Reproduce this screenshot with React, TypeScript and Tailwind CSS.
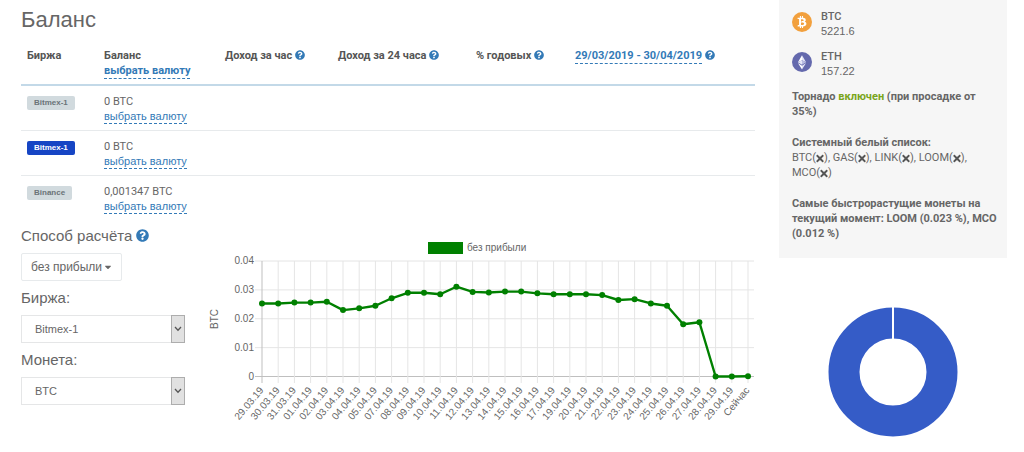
import React, { useState } from 'react';
import { FaBtc, FaCaretDown, FaQuestionCircle, FaTimes } from 'react-icons/fa';
import clsx from 'clsx';

const balances = [
    { name: 'Bitmex-1', amount: '0 BTC', active: false },
    { name: 'Bitmex-1', amount: '0 BTC', active: true },
    { name: 'Binance', amount: '0,001347 BTC', active: false },
];

const history: [string, number][] = [
    ['29.03.19', 0.0253], ['30.03.19', 0.0253], ['31.03.19', 0.0256], ['01.04.19', 0.0256],
    ['02.04.19', 0.0259], ['03.04.19', 0.023], ['04.04.19', 0.0236], ['05.04.19', 0.0245],
    ['07.04.19', 0.0271], ['08.04.19', 0.029], ['09.04.19', 0.029], ['10.04.19', 0.0285],
    ['11.04.19', 0.0311], ['12.04.19', 0.0293], ['13.04.19', 0.0291], ['14.04.19', 0.0294],
    ['15.04.19', 0.0294], ['16.04.19', 0.0288], ['17.04.19', 0.0285], ['19.04.19', 0.0285],
    ['20.04.19', 0.0285], ['21.04.19', 0.0282], ['22.04.19', 0.0265], ['23.04.19', 0.0268],
    ['24.04.19', 0.0253], ['25.04.19', 0.0245], ['26.04.19', 0.0181], ['27.04.19', 0.0188],
    ['28.04.19', 0], ['29.04.19', 0], ['Сейчас', 0.0001],
];

const whitelist = ['BTC', 'GAS', 'LINK', 'LOOM', 'MCO'];

const Help = ({ className }: { className?: string }) => (
    <button type="button" aria-label="Справка" className="inline-block align-[-1px]">
        <FaQuestionCircle className={clsx('text-[#337ab7]', className ?? 'w-[10px] h-[10px]')} />
    </button>
);

const PickCurrency = () => (
    <a href="#currency" className="inline-block border-b border-dashed border-[#337ab7] text-[#337ab7] leading-[14px]">
        выбрать валюту
    </a>
);

const BalanceTable = () => (
    <table className="w-full table-fixed text-left text-[11px] leading-[15px] font-[Roboto,sans-serif]">
        <colgroup>
            <col className="w-[77px]" />
            <col className="w-[121px]" />
            <col className="w-[113px]" />
            <col className="w-[138px]" />
            <col className="w-[99px]" />
            <col />
        </colgroup>
        <thead>
            <tr className="border-b-2 border-[#c3d9e8] align-top whitespace-nowrap text-[#555]">
                <th className="px-[6px] pt-2 pb-[5px]">Биржа</th>
                <th className="px-[6px] pt-2 pb-[5px]">
                    Баланс<br />
                    <PickCurrency />
                </th>
                <th className="px-[6px] pt-2 pb-[5px]">Доход за час <Help /></th>
                <th className="px-[6px] pt-2 pb-[5px]">Доход за 24 часа <Help /></th>
                <th className="px-[6px] pt-2 pb-[5px]">% годовых <Help /></th>
                <th className="px-[6px] pt-2 pb-[5px]">
                    <a href="#period" className="inline-block border-b border-dashed border-[#337ab7] text-[#337ab7]">
                        29/03/2019 - 30/04/2019
                    </a>{' '}
                    <Help />
                </th>
            </tr>
        </thead>
        <tbody className="text-[#666]">
            {balances.map((row, i) => (
                <tr key={i} className="border-b border-[#e7eaec] last:border-0 align-top">
                    <td className="px-[6px] pt-2 pb-[6px]">
                        <span
                            className={clsx(
                                'inline-block rounded-[2px] px-[7px] font-["Liberation_Sans",sans-serif] text-[8px] font-bold leading-[14px]',
                                row.active ? 'bg-[#1645c4] text-white' : 'bg-[#d1dade] text-[#6b7378]'
                            )}
                        >
                            {row.name}
                        </span>
                    </td>
                    <td className="px-[6px] pt-2 pb-[6px] whitespace-nowrap">
                        {row.amount}<br />
                        <span className="font-['Liberation_Sans',sans-serif]">
                            <PickCurrency />
                        </span>
                    </td>
                    <td colSpan={4}></td>
                </tr>
            ))}
        </tbody>
    </table>
);

interface SelectFieldProps {
    id: string;
    label: string;
    options: string[];
}

const SelectField: React.FC<SelectFieldProps> = ({ id, label, options }) => {
    const [value, setValue] = useState(options[0]);

    return (
        <div>
            <label htmlFor={id} className="block py-[7px] text-[15px] leading-5">{label}</label>
            <div className="relative">
                <select
                    id={id}
                    value={value}
                    onChange={(e) => setValue(e.target.value)}
                    className="block h-7 w-full appearance-none border border-[#e5e6e7] bg-white pl-[13px] text-[11px] text-[#666]"
                >
                    {options.map((o) => <option key={o}>{o}</option>)}
                </select>
                <span className="pointer-events-none absolute inset-y-0 right-0 flex w-[14px] items-center justify-center border border-[#adadad] bg-[#e1e1e1]">
                    <svg viewBox="0 0 8 6" className="h-[6px] w-2" fill="none" stroke="#555" strokeWidth="1.3">
                        <path d="M1 1l3 3.2L7 1" />
                    </svg>
                </span>
            </div>
        </div>
    );
};

const BalanceChart = () => {
    const x = (i: number) => 57 + i * 16.2;
    const y = (v: number) => 141.5 - v * 2887;
    const line = history.map(([, v], i) => `${x(i)},${y(v)}`).join(' ');

    return (
        <svg viewBox="0 0 550 190" className="w-full font-['Liberation_Sans',sans-serif] text-[10px]" fill="#666" role="img" aria-label="без прибыли">
            <rect x="223" y="7" width="35" height="12" fill="green" />
            <text x="262" y="16">без прибыли</text>
            <text textAnchor="middle" transform="translate(13 84) rotate(-90)">BTC</text>

            {/* Grid */}
            {[0, 0.01, 0.02, 0.03, 0.04].map((v) => (
                <g key={v}>
                    <line x1="50" x2="549" y1={y(v)} y2={y(v)} stroke={v ? '#e5e5e5' : '#bfbfbf'} />
                    <text x="49" y={y(v) + 3} textAnchor="end">{v}</text>
                </g>
            ))}
            {history.map(([date], i) => (
                <g key={date}>
                    <line x1={x(i)} x2={x(i)} y1="26" y2="148" stroke={i ? '#e5e5e5' : '#bfbfbf'} />
                    <text textAnchor="end" transform={`translate(${x(i) - 1} 153) rotate(-50)`} dy="4">{date}</text>
                </g>
            ))}

            {/* Series */}
            <polyline points={line} fill="none" stroke="green" strokeWidth="2.4" strokeLinejoin="round" />
            {history.map(([date, v], i) => (
                <circle key={date} cx={x(i)} cy={y(v)} r="3" fill="green" />
            ))}
        </svg>
    );
};

const BtcIcon = () => (
    <span className="flex h-5 w-5 items-center justify-center rounded-full bg-[#f2a03d]">
        <FaBtc className="h-3 w-3 text-white" />
    </span>
);

const EthIcon = () => (
    <svg viewBox="0 0 32 32" className="h-5 w-5">
        <circle cx="16" cy="16" r="16" fill="#6469ad" />
        <path d="M16 5v8l6.500 3.300z" fill="#e4e6f7" />
        <path d="M16 5L9.500 16.300 16 13z" fill="#fff" />
        <path d="M16 21.900V28l6.500-10.400z" fill="#e4e6f7" />
        <path d="M16 28v-6.100l-6.500-4.300z" fill="#fff" />
        <path d="M16 20.500l6.500-4.200L16 13z" fill="#b9bde2" />
        <path d="M9.500 16.300l6.500 4.200V13z" fill="#e4e6f7" />
    </svg>
);

const CoinRate = ({ icon, name, rate }: { icon: React.ReactNode; name: string; rate: string }) => (
    <div className="flex gap-[9px]">
        <span className="mt-[3px]">{icon}</span>
        <div>
            <div className="font-medium">{name}</div>
            <div className="font-['Liberation_Sans',sans-serif]">{rate}</div>
        </div>
    </div>
);

const Sidebar = () => (
    <aside className="w-[228px] shrink-0">
        <div className="flex flex-col gap-4 bg-[#f6f6f6] pt-[9px] pr-[7px] pb-[17px] pl-[13px] font-[Roboto,sans-serif] text-[11px] leading-[15px] text-[#666]">
            <div>
                <div className="flex flex-col gap-[10px] pb-[10px]">
                    <CoinRate icon={<BtcIcon />} name="BTC" rate="5221.6" />
                    <CoinRate icon={<EthIcon />} name="ETH" rate="157.22" />
                </div>
                <p className="font-bold">
                    Торнадо <span className="text-[#7aa51c]">включен</span> (при просадке от 35%)
                </p>
            </div>
            <div>
                <p className="font-bold">Системный белый список:</p>
                <p>
                    {whitelist.map((coin, i) => (
                        <React.Fragment key={coin}>
                            {i > 0 && ', '}
                            <span className="whitespace-nowrap">
                                {coin}(<FaTimes className="inline h-[11px] w-2 text-[#555]" />)
                            </span>
                        </React.Fragment>
                    ))}
                </p>
            </div>
            <p className="font-bold">
                Самые быстрорастущие монеты на текущий момент: LOOM (0.023 %), MCO (0.012 %)
            </p>
        </div>

        <svg viewBox="0 0 130 130" className="mx-auto mt-[49px] block w-[130px]" role="img" aria-label="Доли монет">
            <circle cx="65" cy="65" r="49" fill="none" stroke="#355cc7" strokeWidth="31" />
            <line x1="65" x2="65" y1="0" y2="33" stroke="#fff" strokeWidth="2" />
        </svg>
    </aside>
);

export default function App() {
    return (
        <div className="flex items-start gap-6 bg-white pr-[17px] pl-[21px] font-['Liberation_Sans',sans-serif] text-[#666]">
            <main className="min-w-0 flex-1">
                <h1 className="pt-[6px] pb-[6px] text-[22px] leading-7">Баланс</h1>
                <BalanceTable />

                <div className="flex items-start pt-[6px]">
                    <div className="w-[184px] shrink-0 pr-5">
                        <h2 className="pb-[7px] text-[15px] leading-5">
                            Способ расчёта <Help className="h-[13px] w-[13px]" />
                        </h2>
                        <button
                            type="button"
                            className="flex h-7 items-center gap-[2px] rounded-[2px] border border-[#e7eaec] px-[9px] text-xs"
                        >
                            без прибыли
                            <FaCaretDown className="h-[10px] w-[8px]" />
                        </button>
                        <SelectField id="exchange" label="Биржа:" options={['Bitmex-1', 'Binance']} />
                        <SelectField id="coin" label="Монета:" options={['BTC', 'ETH']} />
                    </div>
                    <div className="min-w-0 flex-1 pt-[9px]">
                        <BalanceChart />
                    </div>
                </div>
            </main>
            <Sidebar />
        </div>
    );
}
